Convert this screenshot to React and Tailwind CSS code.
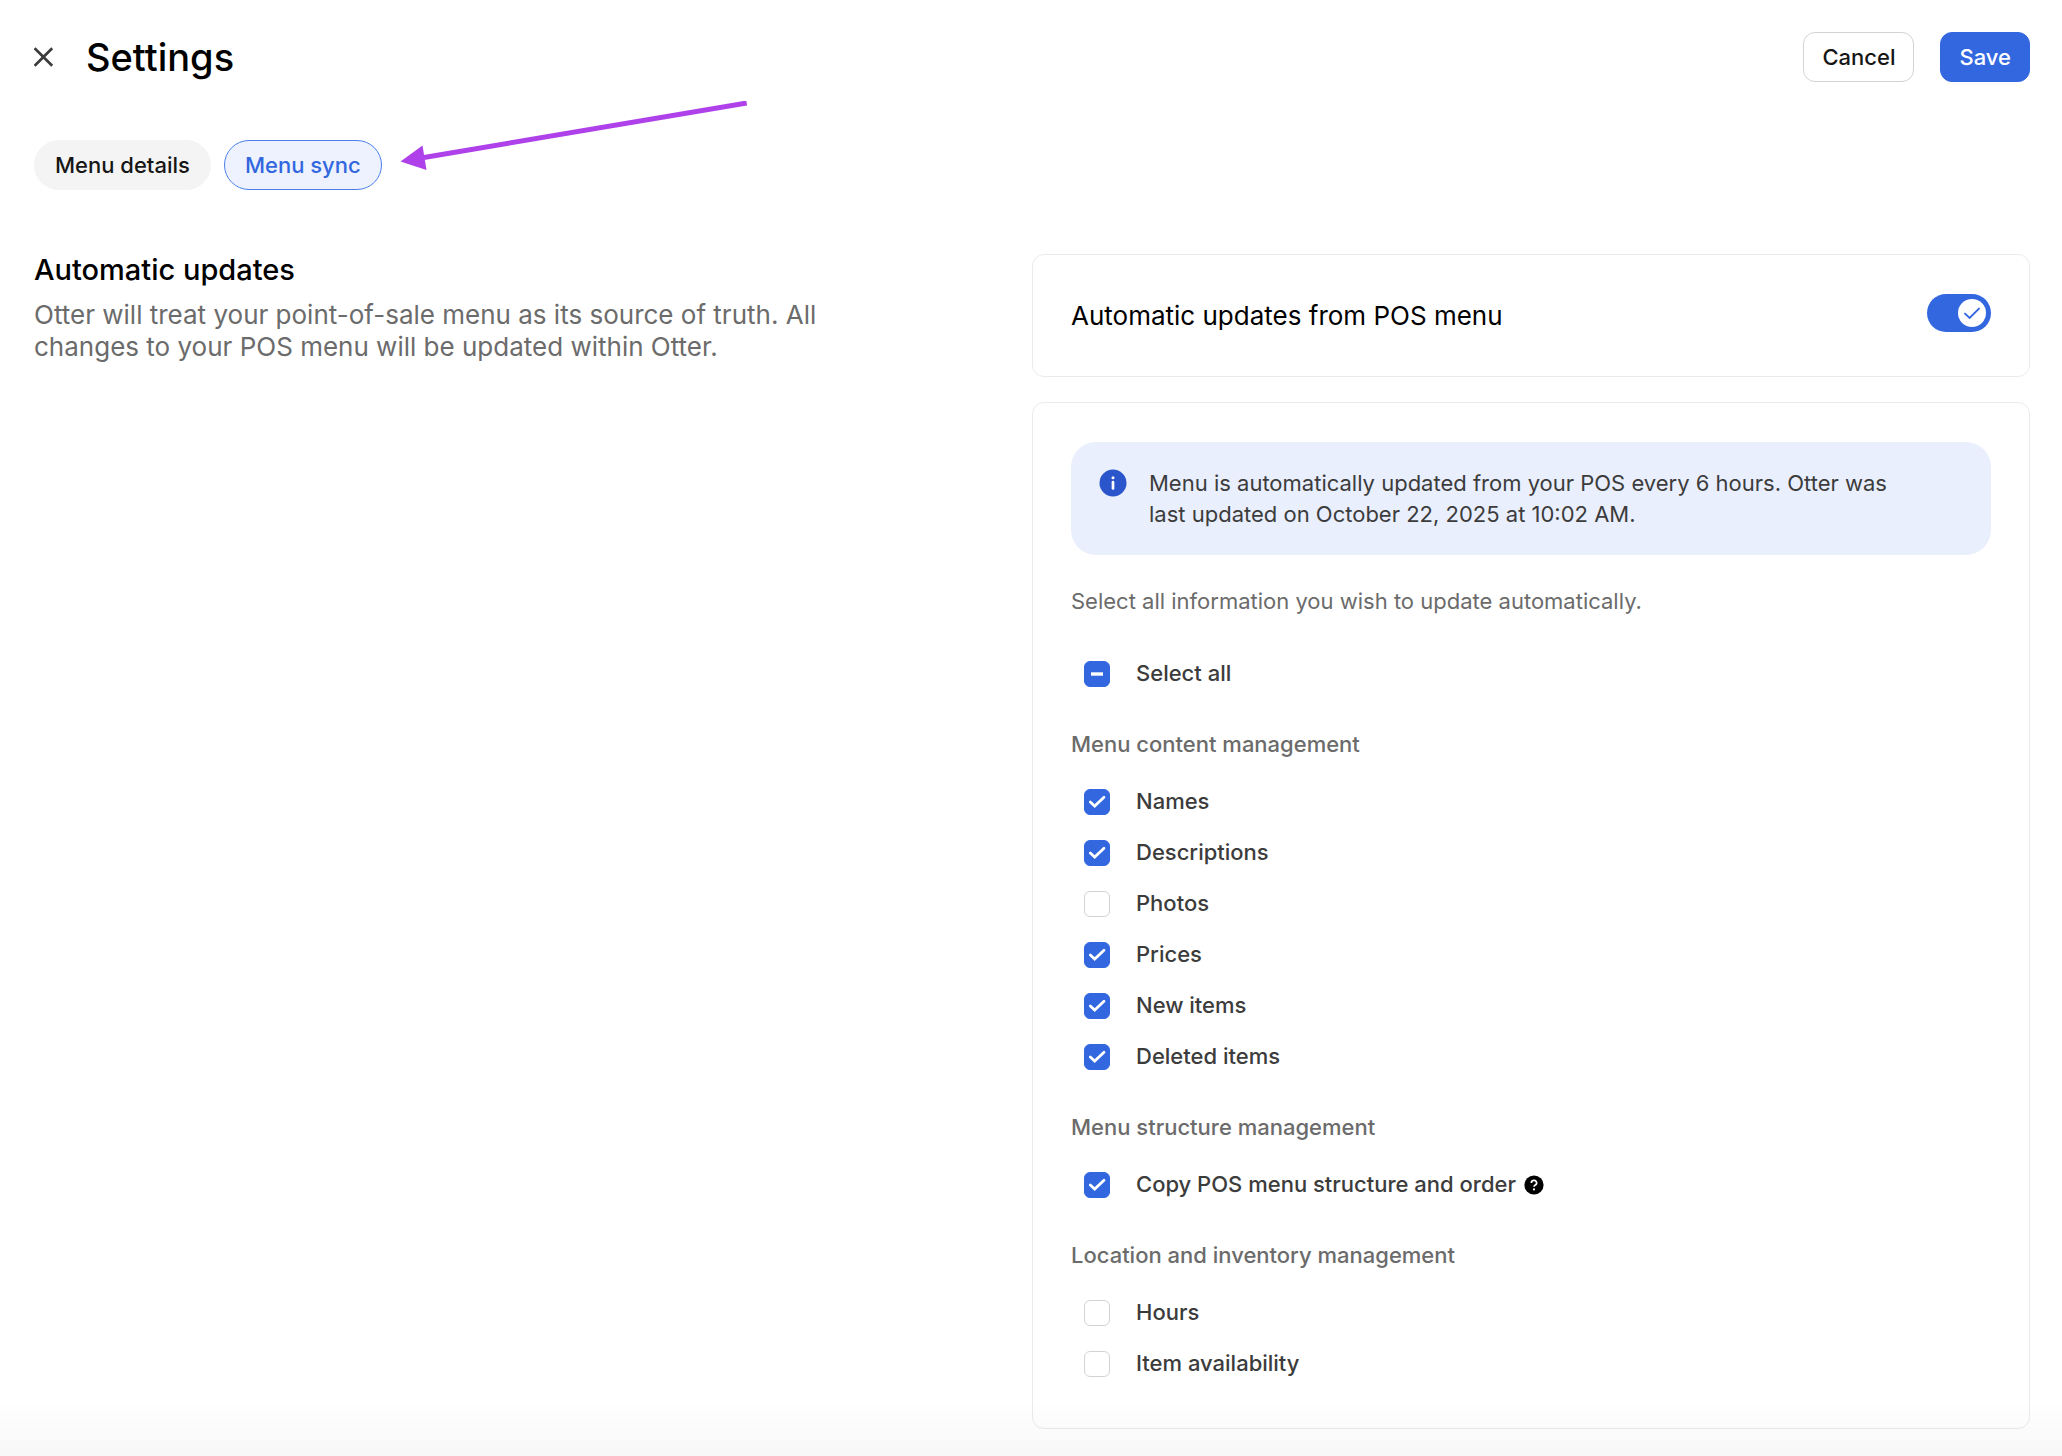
import React, { useState } from "react"

const CONTENT_OPTIONS = [
  { id: "names", label: "Names" },
  { id: "descriptions", label: "Descriptions" },
  { id: "photos", label: "Photos" },
  { id: "prices", label: "Prices" },
  { id: "newItems", label: "New items" },
  { id: "deletedItems", label: "Deleted items" },
]

const STRUCTURE_OPTIONS = [
  { id: "structure", label: "Copy POS menu structure and order", help: true },
]

const LOCATION_OPTIONS = [
  { id: "hours", label: "Hours" },
  { id: "availability", label: "Item availability" },
]

const INITIAL = {
  names: true,
  descriptions: true,
  photos: false,
  prices: true,
  newItems: true,
  deletedItems: true,
  structure: true,
  hours: false,
  availability: false,
}

function HelpIcon() {
  return (
    <svg viewBox="0 0 20 20" className="ml-2 size-5" aria-hidden="true">
      <circle cx="10" cy="10" r="9.6" fill="#000" />
      <path d="M7.4 7.9a2.6 2.5 0 1 1 3.9 2.1c-.8.5-1.3.9-1.3 1.8" fill="none" stroke="#fff" strokeWidth="1.7" />
      <circle cx="10" cy="14.4" r="1.1" fill="#fff" />
    </svg>
  )
}

function CheckRow({ id, label, checked, mixed, onChange, help }) {
  return (
    <div className="flex h-[51px] items-center pl-[13px]">
      <div className="grid size-[26px] place-items-center">
        <input
          id={id}
          type="checkbox"
          checked={checked}
          onChange={onChange}
          ref={(el) => {
            if (el) el.indeterminate = Boolean(mixed)
          }}
          className="col-start-1 row-start-1 size-[26px] appearance-none rounded-md border border-[#d3d3d3] bg-white checked:border-[#3367e0] checked:bg-[#3367e0] indeterminate:border-[#3367e0] indeterminate:bg-[#3367e0]"
        />
        {(checked || mixed) && (
          <svg viewBox="0 0 26 26" className="pointer-events-none z-10 col-start-1 row-start-1 size-[26px]" fill="none" stroke="#fff">
            {mixed ? (
              <path d="M7 13h12" strokeWidth="3.4" />
            ) : (
              <path d="M6.3 12.9l4.4 4.2L20 8.200" strokeWidth="2.7" strokeLinecap="round" />
            )}
          </svg>
        )}
      </div>
      <label htmlFor={id} className="pl-[26px] font-medium text-[#3c3c3c]">
        {label}
      </label>
      {help && <HelpIcon />}
    </div>
  )
}

function Group({ title, options, values, onToggle }) {
  return (
    <section>
      <h3 className="mt-[30px] mb-4 font-medium text-[#6b6b6b]">{title}</h3>
      {options.map((option) => (
        <CheckRow
          key={option.id}
          {...option}
          checked={values[option.id]}
          onChange={() => onToggle(option.id)}
        />
      ))}
    </section>
  )
}

export default function App() {
  const [tab, setTab] = useState("sync")
  const [auto, setAuto] = useState(true)
  const [values, setValues] = useState(INITIAL)

  const all = Object.values(values).every(Boolean)
  const some = Object.values(values).some(Boolean)

  const toggle = (id) => setValues((prev) => ({ ...prev, [id]: !prev[id] }))

  const toggleAll = () => {
    setValues((prev) => Object.fromEntries(Object.keys(prev).map((key) => [key, !all])))
  }

  const tabClass = (name) =>
    tab === name
      ? "h-[50px] rounded-full border border-[#4a80ea] bg-[#edf2fe] px-5 font-medium text-[#3367e0]"
      : "h-[50px] rounded-full border border-[#f4f4f4] bg-[#f4f4f4] px-5 font-medium text-[#161616]"

  return (
    <div className="min-h-screen bg-white pt-8 pr-8 pb-[26px] pl-[34px] font-['Inter',sans-serif] text-[22px] leading-[31px]">
      <header className="flex h-[50px] items-center justify-between">
        <div className="flex items-center gap-8">
          <button type="button" aria-label="Close">
            <svg viewBox="0 0 20 20" className="size-5" fill="none" stroke="#3c3c3c" strokeWidth="2.7">
              <path d="M.6 1.2l17.6 17.6M18.200 1.2L.6 18.8" />
            </svg>
          </button>
          <h1 className="text-[38px] leading-[50px] font-medium text-black">Settings</h1>
        </div>
        <div className="flex gap-[26px]">
          <button type="button" className="h-[50px] rounded-xl border border-[#d3d3d3] bg-white px-[18px] font-medium text-[#161616]">
            Cancel
          </button>
          <button type="button" className="h-[50px] rounded-xl border border-[#3367e0] bg-[#3367e0] px-[18px] font-medium text-white">
            Save
          </button>
        </div>
      </header>

      <nav className="relative mt-[58px] flex gap-[13px]">
        <button type="button" onClick={() => setTab("details")} className={tabClass("details")}>
          Menu details
        </button>
        <button type="button" onClick={() => setTab("sync")} className={tabClass("sync")}>
          Menu sync
        </button>
        <svg viewBox="0 0 348 70" className="pointer-events-none absolute -top-[39px] left-[366px] h-[70px] w-[348px]">
          <path d="M346.7 2L24 56.5" stroke="#ae41ea" strokeWidth="5" />
          <path d="M0.5 60.5L22.5 44.5L26.5 69Z" fill="#ae41ea" />
        </svg>
      </nav>

      <main className="mt-16 grid grid-cols-2">
        <section>
          <h2 className="text-[29px] leading-8 font-medium text-black">Automatic updates</h2>
          <p className="mt-[13px] max-w-[800px] text-[26px] leading-8 text-[#6b6b6b]">
            Otter will treat your point-of-sale menu as its source of truth. All changes to your POS menu will be updated within Otter.
          </p>
        </section>

        <div className="flex flex-col gap-[25px]">
          <section className="flex items-start justify-between rounded-xl border border-[#ebebeb] px-[38px] py-[39px]">
            <label htmlFor="auto" className="text-[26px] leading-[43px] text-black">
              Automatic updates from POS menu
            </label>
            <div className="grid h-[38px] w-16 items-center">
              <input
                id="auto"
                type="checkbox"
                role="switch"
                checked={auto}
                onChange={() => setAuto(!auto)}
                className="col-start-1 row-start-1 h-[38px] w-16 appearance-none rounded-full bg-[#bdbdbd] checked:bg-[#3367e0]"
              />
              <svg
                viewBox="0 0 28 28"
                className={
                  auto
                    ? "pointer-events-none z-10 col-start-1 row-start-1 mr-[5px] size-7 justify-self-end"
                    : "pointer-events-none z-10 col-start-1 row-start-1 ml-[5px] size-7 justify-self-start"
                }
              >
                <circle cx="14" cy="14" r="14" fill="#fff" />
                {auto && (
                  <path d="M7 14.6l4.6 4.4L21 9.6" fill="none" stroke="#3367e0" strokeWidth="1.9" strokeLinecap="round" />
                )}
              </svg>
            </div>
          </section>

          <section className="rounded-xl border border-[#ebebeb] px-[38px] py-[39px]">
            <div className="flex items-start rounded-[25px] bg-[#e9effc] pt-[26px] pr-[72px] pb-[25px] pl-7 text-[#3c3c3c]">
              <svg viewBox="0 0 28 28" className="mt-px mr-[22px] size-7 shrink-0" aria-hidden="true">
                <circle cx="14" cy="14" r="13.5" fill="#2a55cb" />
                <circle cx="14" cy="8.8" r="1.5" fill="#fff" />
                <path d="M14 13.2v6.2" stroke="#fff" strokeWidth="2.7" strokeLinecap="round" />
              </svg>
              <p>
                Menu is automatically updated from your POS every 6 hours. Otter was last updated on October 22, 2025 at 10:02 AM.
              </p>
            </div>

            <p className="my-[31px] text-[#6b6b6b]">Select all information you wish to update automatically.</p>

            <CheckRow id="all" label="Select all" checked={all} mixed={some && !all} onChange={toggleAll} />
            <Group title="Menu content management" options={CONTENT_OPTIONS} values={values} onToggle={toggle} />
            <Group title="Menu structure management" options={STRUCTURE_OPTIONS} values={values} onToggle={toggle} />
            <Group title="Location and inventory management" options={LOCATION_OPTIONS} values={values} onToggle={toggle} />
          </section>
        </div>
      </main>

      {/* fade along the bottom edge of the window */}
      <div className="pointer-events-none fixed inset-x-0 bottom-0 h-14 bg-linear-to-t from-black/3 to-transparent" />
    </div>
  )
}
